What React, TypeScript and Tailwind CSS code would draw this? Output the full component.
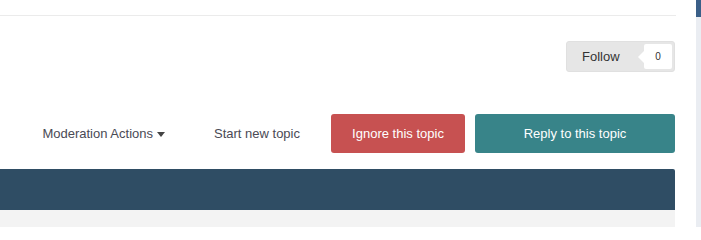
import React from "react";

export default function App() {
  return (
    <div
      className="flex w-[701px] h-[227px] bg-white overflow-hidden"
      style={{ fontFamily: '"Liberation Sans", Arial, sans-serif' }}
    >
      <div className="w-[676px] flex flex-col">
        <div className="h-[16px] border-b border-[#ebebeb]" />
        <div className="flex justify-end pt-[25px] pr-px">
          <div className="flex items-center h-[31px] w-[109px] rounded-[3px] bg-[#e6e6e6] border border-[#e0e0e0] pl-[15px] pr-[2px]">
            <span className="text-[13px] text-[#333]">Follow</span>
            <div className="ml-auto relative flex items-center justify-center w-[28px] h-[25px] bg-white rounded-[2px]">
              <span className="absolute left-[-6px] top-[7px] w-0 h-0 border-y-[6px] border-y-transparent border-r-[6px] border-r-white" />
              <span className="text-[10px] text-[#333]">0</span>
            </div>
          </div>
        </div>
        <div className="flex items-center justify-end mt-[42px] h-[39px] pr-px text-[13px]">
          <span className="flex items-center text-[#4a4a55] mr-[49px]">
            Moderation Actions
            <span className="ml-[4px] mt-px w-0 h-0 border-x-[4px] border-x-transparent border-t-[5px] border-t-[#444]" />
          </span>
          <span className="text-[#4a4a55] mr-[31px]">Start new topic</span>
          <div className="w-[134px] h-[39px] mr-[10px] rounded-[3px] bg-[#c75151] text-white flex items-center justify-center">
            Ignore this topic
          </div>
          <div className="w-[200px] h-[39px] rounded-[3px] bg-[#388489] text-white flex items-center justify-center">
            Reply to this topic
          </div>
        </div>
        <div className="mt-[16px] h-[41px] w-[675px] bg-[#2f4d64] rounded-tr-[2px]" />
        <div className="flex-1 w-[675px] bg-[#f3f3f3]" />
      </div>
      <div className="w-[20px]" />
      <div className="w-[5px] flex flex-col bg-[#eaedf2]">
        <div className="h-[17px] bg-[#3a5f88]" />
      </div>
    </div>
  );
}
